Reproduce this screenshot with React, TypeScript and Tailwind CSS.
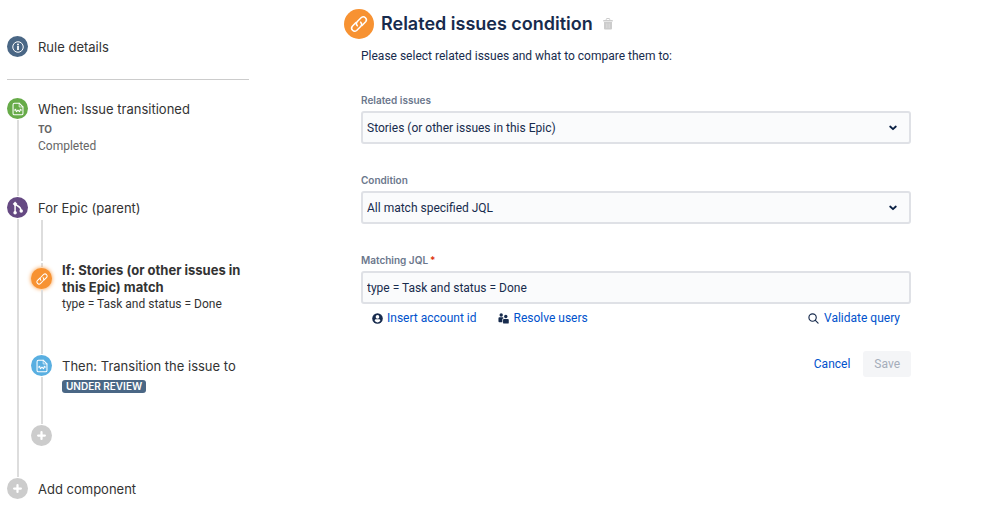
import React from "react";
import { clsx } from "clsx";

type IconProps = { className?: string };

const InfoIcon = ({ className }: IconProps) => (
  <svg viewBox="0 0 24 24" className={className} fill="none" stroke="currentColor" strokeWidth="2" aria-hidden="true">
    <circle cx="12" cy="12" r="10.5" />
    <path d="M12 10v8" strokeWidth="3.5" />
    <circle cx="12" cy="7" r="2" fill="currentColor" stroke="none" />
  </svg>
);

const TransitionIcon = ({ className }: IconProps) => (
  <svg viewBox="0 0 24 24" className={className} fill="none" stroke="currentColor" strokeWidth="1.8" strokeLinejoin="round" strokeLinecap="round" aria-hidden="true">
    <path d="M14 2H6a2.5 2.5 0 0 0-2.5 2.5v15A2.5 2.5 0 0 0 6 22h12a2.5 2.5 0 0 0 2.5-2.5V8.5z" />
    <path d="M14 2v6.5h6.5" strokeWidth="1.2" />
    <path d="M7.5 13l2 3.5 2.5-2.5 2.5 2.5 2-3.5" />
    <path d="M6.5 15v-2.5h2M17.5 15v-2.5h-2" strokeWidth="1.2" />
  </svg>
);

const BranchIcon = ({ className }: IconProps) => (
  <svg viewBox="0 0 24 24" className={className} fill="none" stroke="currentColor" strokeWidth="2.5" aria-hidden="true">
    <path d="M7 4v16" />
    <path d="M7 5c2 4 10 3 10 11" />
    <path d="M7 1l4 4-4 4-4-4z" fill="currentColor" stroke="none" />
    <circle cx="7" cy="20" r="3" fill="currentColor" stroke="none" />
    <circle cx="17.5" cy="17" r="3" fill="currentColor" stroke="none" />
  </svg>
);

const LinkIcon = ({ className }: IconProps) => (
  <svg viewBox="0 0 24 24" className={className} fill="none" stroke="currentColor" strokeWidth="1.8" strokeLinecap="round" strokeLinejoin="round" aria-hidden="true">
    <path d="M10 14.2a3.7 3.7 0 0 1 0-5.2l4.8-4.8a3.7 3.7 0 0 1 5.2 5.2l-4.3 4.3" />
    <path d="M14 9.8a3.7 3.7 0 0 1 0 5.2l-4.8 4.8a3.7 3.7 0 0 1-5.2-5.2l4.3-4.3" />
  </svg>
);

const PlusIcon = ({ className }: IconProps) => (
  <svg viewBox="0 0 24 24" className={className} fill="none" stroke="currentColor" strokeWidth="6" strokeLinecap="round" aria-hidden="true">
    <path d="M12 3v18M3 12h18" />
  </svg>
);

const TrashIcon = ({ className }: IconProps) => (
  <svg viewBox="0 0 24 24" className={className} fill="none" stroke="currentColor" aria-hidden="true">
    <path d="M8.5 4V2.5A1.5 1.5 0 0 1 10 1h4a1.5 1.5 0 0 1 1.5 1.5V4" strokeWidth="2" />
    <path d="M2.5 4h19v3h-19z" fill="currentColor" stroke="none" />
    <path d="M4 8h16v13a2 2 0 0 1-2 2H6a2 2 0 0 1-2-2z" fill="currentColor" stroke="none" />
    <path d="M9 11v9M12 11v9M15 11v9" stroke="white" strokeWidth="1" opacity=".4" />
  </svg>
);

const AccountIcon = ({ className }: IconProps) => (
  <svg viewBox="0 0 24 24" className={className} aria-hidden="true">
    <circle cx="12" cy="12" r="11.5" fill="currentColor" />
    <circle cx="12" cy="8.5" r="4" fill="white" />
    <path d="M6 17.5V16a2.5 2.5 0 0 1 2.5-2.5h7A2.5 2.5 0 0 1 18 16v1.5a8.5 8.5 0 0 1-12 0z" fill="white" />
  </svg>
);

const PeopleIcon = ({ className }: IconProps) => (
  <svg viewBox="0 0 24 24" className={className} fill="currentColor" aria-hidden="true">
    <circle cx="7" cy="4.5" r="3.7" />
    <circle cx="17" cy="7.5" r="3.7" />
    <path d="M1 11.5a2 2 0 0 1 2-2h8.500v3H9.500V20H3a2 2 0 0 1-2-2z" />
    <path d="M11 15a2 2 0 0 1 2-2h8.500a2 2 0 0 1 2 2v6a2 2 0 0 1-2 2H13a2 2 0 0 1-2-2z" />
  </svg>
);

const SearchIcon = ({ className }: IconProps) => (
  <svg viewBox="0 0 24 24" className={className} fill="none" stroke="currentColor" strokeWidth="2.5" strokeLinecap="round" aria-hidden="true">
    <circle cx="10" cy="10" r="8" />
    <path d="M16 16l6 6" />
  </svg>
);

const ChevronIcon = ({ className }: IconProps) => (
  <svg viewBox="0 0 8 6" className={className} fill="none" stroke="currentColor" strokeWidth="1.8" strokeLinecap="round" strokeLinejoin="round" aria-hidden="true">
    <path d="M1.2 1.5L4 4.2l2.8-2.7" />
  </svg>
);

const Dot = ({ className, children }: { className: string; children: React.ReactNode }) => (
  <span className={clsx("flex size-[21px] shrink-0 items-center justify-center rounded-full text-white", className)}>
    {children}
  </span>
);

const Line = ({ className }: { className: string }) => <span className={clsx("my-px w-0.5 bg-[#dddddd]", className)} />;

const Rail = ({ children }: { children: React.ReactNode }) => (
  <div className="flex w-[21px] shrink-0 flex-col items-center">{children}</div>
);

const Sidebar = () => (
  <nav aria-label="Rule" className="w-[242px] shrink-0 text-[13px] leading-[22px] text-[#333333]">
    <a href="#details" className="flex gap-[10px] border-b border-[#cccccc] pt-9 pb-[21px]">
      <Dot className="bg-[#4a6785]">
        <InfoIcon className="size-3" />
      </Dot>
      Rule details
    </a>

    <ol className="pt-[18px]">
      <li className="flex min-h-[99px] gap-[10px]">
        <Rail>
          <Dot className="bg-[#67ab49]">
            <TransitionIcon className="size-[14px]" />
          </Dot>
          <Line className="flex-1" />
        </Rail>
        <div>
          <a href="#when" className="block">When: Issue transitioned</a>
          <p className="text-[10px] leading-[18px] font-bold text-[#666666]">TO</p>
          <p className="font-['Roboto','Liberation_Sans',sans-serif] text-xs leading-4 text-[#666666]">Completed</p>
        </div>
      </li>

      <li className="flex">
        <Rail>
          <Dot className="bg-[#654982]">
            <BranchIcon className="size-[14px]" />
          </Dot>
          <Line className="flex-1" />
        </Rail>
        <div className="flex-1 pb-8">
          <a href="#branch" className="block pl-[10px]">For Epic (parent)</a>
          <div className="pl-[3px]">
            <Rail>
              <Line className="h-[41px]" />
            </Rail>
            <ol>
              <li className="flex min-h-[93px] gap-[10px]">
                <Rail>
                  <Line className="h-1" />
                  <Dot className="bg-[#f79232] shadow-[0_0_4px_#f79232]">
                    <LinkIcon className="size-[14px]" />
                  </Dot>
                  <Line className="flex-1" />
                </Rail>
                <div>
                  <a href="#if" className="block leading-[17px] font-bold">
                    If: Stories (or other issues in this Epic) match
                  </a>
                  <p className="font-['Roboto','Liberation_Sans',sans-serif] text-xs leading-4">type = Task and status = Done</p>
                </div>
              </li>
              <li className="flex min-h-[70px] gap-[10px]">
                <Rail>
                  <Dot className="bg-[#59afe1]">
                    <TransitionIcon className="size-[14px]" />
                  </Dot>
                  <Line className="flex-1" />
                </Rail>
                <div>
                  <a href="#then" className="block">Then: Transition the issue to</a>
                  <span className="mt-[3px] block w-fit rounded-[3px] bg-[#4a6785] px-1 text-[10px] leading-[13px] font-semibold text-white">
                    UNDER REVIEW
                  </span>
                </div>
              </li>
              <li>
                <button type="button" aria-label="Add component to branch" className="block">
                  <Dot className="bg-[#cccccc]">
                    <PlusIcon className="size-[9px]" />
                  </Dot>
                </button>
              </li>
            </ol>
          </div>
        </div>
      </li>

      <li>
        <button type="button" className="flex gap-[10px]">
          <Dot className="bg-[#cccccc]">
            <PlusIcon className="size-[9px]" />
          </Dot>
          Add component
        </button>
      </li>
    </ol>
  </nav>
);

const fieldClass = "block h-[33px] w-full rounded-[3px] border-2 border-[#dfe1e6] bg-[#fafbfc] px-1 text-xs text-[#172b4d]";
const labelClass = "block pb-[3px] font-['Inter','Liberation_Sans',sans-serif] text-[10px] leading-4 font-semibold text-[#6b778c]";

const SelectField = ({ id, label, value }: { id: string; label: string; value: string }) => (
  <div>
    <label htmlFor={id} className={labelClass}>{label}</label>
    <div className="relative">
      <select id={id} className={clsx(fieldClass, "appearance-none")}>
        <option>{value}</option>
      </select>
      <ChevronIcon className="pointer-events-none absolute top-[14px] right-[14px] h-[6px] w-2 text-[#091e42]" />
    </div>
  </div>
);

const ConditionForm = () => (
  <main className="min-w-0 flex-1 pt-[9px] text-xs text-[#172b4d]">
    <header className="flex items-center">
      <span className="flex size-[30px] items-center justify-center rounded-full bg-[#f79232] text-white">
        <LinkIcon className="size-5" />
      </span>
      <h1 className="pl-[7px] text-lg leading-6 font-semibold">Related issues condition</h1>
      <button type="button" aria-label="Delete" className="pl-[9px] text-[#cccccc]">
        <TrashIcon className="size-3" />
      </button>
    </header>

    <form className="pl-[17px] font-['Roboto','Liberation_Sans',sans-serif]">
      <p className="pt-2 pb-[27px] leading-[18px]">Please select related issues and what to compare them to:</p>
      <div className="flex flex-col gap-7">
        <SelectField id="related" label="Related issues" value="Stories (or other issues in this Epic)" />
        <SelectField id="condition" label="Condition" value="All match specified JQL" />
        <div>
          <label htmlFor="jql" className={labelClass}>
            Matching JQL<span className="pl-0.5 text-[#de350b]">*</span>
          </label>
          <input id="jql" type="text" defaultValue="type = Task and status = Done" className={fieldClass} />
        </div>
      </div>
      <div className="flex gap-[22px] pt-[5px] pr-[11px] pl-[11px] leading-[18px] text-[#0052cc]">
        <button type="button" className="flex items-center gap-1">
          <AccountIcon className="size-[11px] text-[#172b4d]" />
          Insert account id
        </button>
        <button type="button" className="flex items-center gap-1">
          <PeopleIcon className="size-[11px] text-[#172b4d]" />
          Resolve users
        </button>
        <button type="button" className="ml-auto flex items-center gap-[5px]">
          <SearchIcon className="size-[11px] text-[#172b4d]" />
          Validate query
        </button>
      </div>
      <div className="flex justify-end gap-[13px] pt-6">
        <button type="button" className="text-[#0052cc]">Cancel</button>
        <button type="submit" disabled className="rounded-[3px] bg-[#f4f5f7] px-[11px] leading-[26px] text-[#a5adba]">Save</button>
      </div>
    </form>
  </main>
);

export default function App() {
  return (
    <div className="flex min-h-screen gap-[95px] bg-white pr-[88px] pl-[7px] font-['Inter','Liberation_Sans',sans-serif]">
      <Sidebar />
      <ConditionForm />
    </div>
  );
}
